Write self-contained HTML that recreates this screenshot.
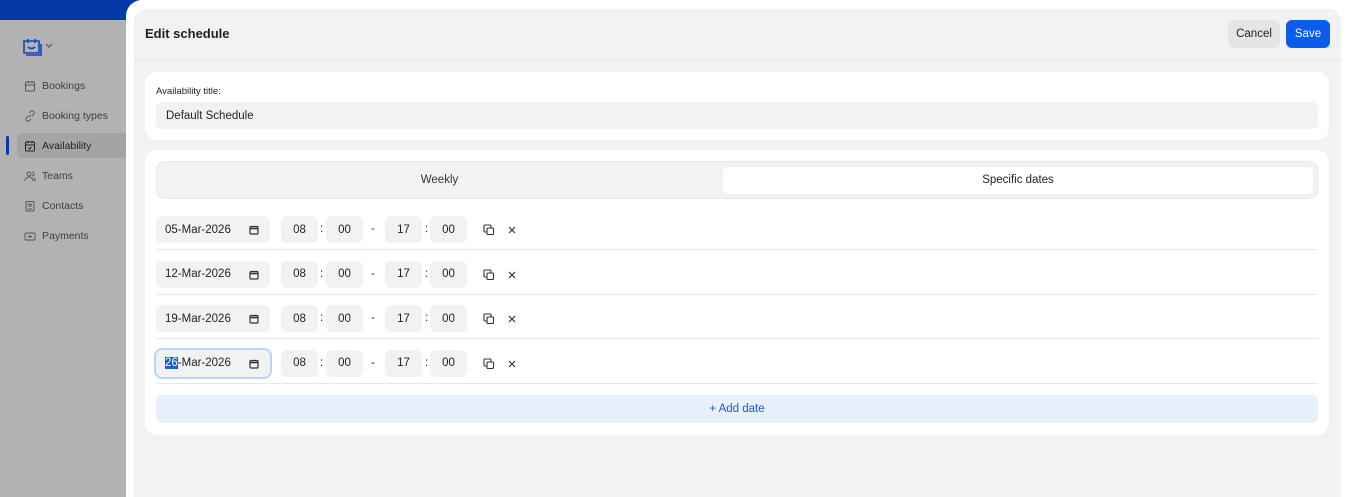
<!DOCTYPE html>
<html style="overflow:hidden;height:497px"><head><style>
*{box-sizing:border-box;margin:0;padding:0}
body{width:1360px;height:497px;overflow:hidden;position:relative;background:#fff;font-family:"Liberation Sans",Arial,sans-serif;color:#1f2937}
.sb{position:absolute;left:0;top:0;width:140px;height:497px;background:#b2b2b2}
.top{position:absolute;left:0;top:0;width:140px;height:20px;background:#0539a6}
.nav{position:absolute;left:24px;font-size:10.5px;color:#3f3f3f;display:flex;align-items:center;gap:6px}
.nav svg{width:12px;height:12px}
.act{position:absolute;left:17px;top:133px;width:120px;height:25px;background:#a4a4a4;border-radius:5px}
.ind{position:absolute;left:6px;top:136px;width:3px;height:19px;background:#0539a6;border-radius:2px}
.white{position:absolute;left:126px;top:0;width:1234px;height:497px;background:#fff;border-radius:16px 0 0 0}
.panel{position:absolute;left:134px;top:9px;width:1207px;height:488px;background:#f1f2f4;border-radius:12px 12px 0 0}
.hdr{position:absolute;left:0;top:0;width:100%;height:52px;border-bottom:1px solid #e3e5e8}
.title{position:absolute;left:11px;top:17px;font-size:13px;font-weight:bold;color:#222}
.btn{position:absolute;top:11px;height:28px;border-radius:6px;font-size:11.5px;display:flex;align-items:center;justify-content:center}
.card{position:absolute;left:11px;width:1184px;background:#fff;border-radius:12px}
.inp{background:#f1f2f4;border-radius:6px;position:absolute;height:27px;font-size:11.5px;display:flex;align-items:center;color:#222}
.tbox{width:37px;justify-content:center}
.sep{position:absolute;left:11px;width:1162px;height:1px;background:#e5e7eb}
.colon{position:absolute;font-size:11.5px}
</style></head><body>
<div class="sb"></div><div class="top"></div>
<svg style="position:absolute;left:22px;top:37px" width="20" height="20" viewBox="0 0 20 20" fill="none" stroke="#1447b8" stroke-width="1.6"><path d="M2 4h15v12H2z"/><path d="M6 2v4M13 2v4M6 10q3.5 3 7 0"/><path d="M4 18h15V7"/></svg>
<svg style="position:absolute;left:45px;top:43px" width="8" height="6" viewBox="0 0 8 6" fill="none" stroke="#555" stroke-width="1.2"><path d="M1 1l3 3 3-3"/></svg>
<div class="act"></div><div class="ind"></div>
<div class="nav" style="top:80px"><svg viewBox="0 0 12 12" fill="none" stroke="#555"><rect x="1.5" y="2" width="9" height="9" rx="1"/><path d="M1.5 5h9M4 1v2M8 1v2"/></svg><span>Bookings</span></div>
<div class="nav" style="top:110px"><svg viewBox="0 0 12 12" fill="none" stroke="#555"><path d="M5 7l2-2M4 6l-1.5 1.5a2 2 0 003 3L7 9M8 6l1.5-1.5a2 2 0 00-3-3L5 3"/></svg><span>Booking types</span></div>
<div class="nav" style="top:140px;color:#222"><svg viewBox="0 0 12 12" fill="none" stroke="#222"><rect x="1.5" y="2" width="9" height="9" rx="1"/><path d="M1.5 5h9M4 1v2M8 1v2M4.5 8l1 1 2-2"/></svg><span>Availability</span></div>
<div class="nav" style="top:170px"><svg viewBox="0 0 12 12" fill="none" stroke="#555"><circle cx="5" cy="4" r="2"/><path d="M1 11a4 4 0 018 0M8 2a2 2 0 010 4M10 8a3 3 0 011 3"/></svg><span>Teams</span></div>
<div class="nav" style="top:200px"><svg viewBox="0 0 12 12" fill="none" stroke="#555"><rect x="2" y="1.5" width="8" height="9.5" rx="1"/><circle cx="6" cy="5" r="1.3"/><path d="M4 9h4"/></svg><span>Contacts</span></div>
<div class="nav" style="top:230px"><svg viewBox="0 0 12 12" fill="none" stroke="#555"><rect x="1" y="3" width="10" height="7" rx="1"/><path d="M4 6.5h4M6 5v3"/></svg><span>Payments</span></div>

<div class="white"></div>
<div class="panel">
 <div class="hdr"></div>
 <div class="title">Edit schedule</div>
 <div class="btn" style="left:1094px;width:52px;background:#e4e5e7;color:#222">Cancel</div>
 <div class="btn" style="left:1152px;width:44px;background:#0a5ceb;color:#fff">Save</div>
 <div class="card" style="top:63px;height:68px">
  <div style="position:absolute;left:11px;top:14px;font-size:9.5px;color:#222">Availability title:</div>
  <div class="inp" style="left:11px;top:30px;width:1162px;padding-left:10px">Default Schedule</div>
 </div>
 <div class="card" style="top:141px;height:285px">
  <div style="position:absolute;left:11px;top:11px;width:1162px;height:38px;background:#f1f2f4;border:1px solid #e8e9eb;border-radius:8px">
   <div style="position:absolute;left:0;top:0;width:565px;height:36px;line-height:36px;text-align:center;font-size:11.5px;color:#333">Weekly</div>
   <div style="position:absolute;left:566px;top:5px;width:590px;height:27px;background:#fff;border-radius:6px;line-height:27px;text-align:center;font-size:11.5px;color:#222">Specific dates</div>
  </div>
  <div id="rows"></div>
  <div style="position:absolute;left:11px;top:245px;width:1162px;height:28px;background:#e8f0fc;border-radius:6px;text-align:center;line-height:28px;font-size:11.5px;color:#1a56db">+ Add date</div>
 </div>
</div>
<script>
var ds=["05","12","19","26"],h="";
ds.forEach(function(d,i){var t=66+i*44.5;
h+='<div class="inp" style="left:11px;top:'+t+'px;width:114px;padding-left:9px;'+(i==3?'box-shadow:0 0 0 2px #bcd3f7;':'')+'">'+(i==3?'<span style="background:#1a5fd6;color:#fff">26</span>':d)+'-Mar-2026<svg style="position:absolute;left:93px;top:9px" width="10" height="10" viewBox="0 0 10 10" fill="none" stroke="#333" stroke-width="1.2"><rect x="1" y="1.5" width="8" height="7.5" rx="1"/><path d="M1 3.5h8" stroke-width="1.6"/></svg></div>';
[[136,"08"],[181,"00"],[240,"17"],[285,"00"]].forEach(function(b){h+='<div class="inp tbox" style="left:'+b[0]+'px;top:'+t+'px">'+b[1]+'</div>'});
h+='<div class="colon" style="left:175px;top:'+(t+7)+'px">:</div><div class="colon" style="left:226px;top:'+(t+7)+'px">-</div><div class="colon" style="left:280px;top:'+(t+7)+'px">:</div>';
h+='<svg style="position:absolute;left:338px;top:'+(t+8)+'px" width="12" height="12" viewBox="0 0 12 12" fill="none" stroke="#333" stroke-width="1.1"><rect x="4" y="4" width="6.5" height="6.5" rx="1"/><path d="M8 4V2a1 1 0 00-1-1H2a1 1 0 00-1 1v5a1 1 0 001 1h2"/></svg>';
h+='<svg style="position:absolute;left:363px;top:'+(t+10)+'px" width="8" height="8" viewBox="0 0 8 8" stroke="#333" stroke-width="1.2"><path d="M1 1l6 6M7 1L1 7"/></svg>';
h+='<div class="sep" style="top:'+(t+33)+'px"></div>';});
document.getElementById('rows').outerHTML=h;
</script>
</body></html>
